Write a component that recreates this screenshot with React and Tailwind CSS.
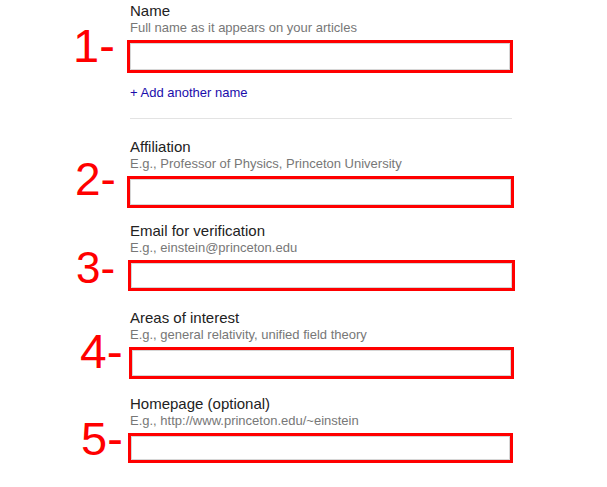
import React from "react";

function Box({ num, numClass, boxClass }) {
  return (
    <div className={`relative border-[3px] border-[#ff0000] ${boxClass}`}>
      <div className="h-full w-full border border-[#d6d6d6]" />
      <span
        className={`absolute leading-none text-[#ff0000] whitespace-nowrap ${numClass}`}
      >
        {num}-
      </span>
    </div>
  );
}

function Field({ label, hint, className, children }) {
  return (
    <div className={className}>
      <div className="text-[15px] leading-[18px] text-[#222]">{label}</div>
      <div className="text-[13px] leading-[16px] text-[#777]">{hint}</div>
      {children}
    </div>
  );
}

export default function App() {
  return (
    <div className="w-[607px] h-[487px] bg-white overflow-hidden font-['Liberation_Sans',Arial,sans-serif]">
      <div className="ml-[130px] w-[382px] pt-[2px] flex flex-col">
        <Field label="Name" hint="Full name as it appears on your articles">
          <Box
            num="1"
            boxClass="mt-[4px] ml-[-3px] w-[386px] h-[33px]"
            numClass="text-[47px] left-[-57px] top-[-21px]"
          />
        </Field>
        <div className="mt-[12px] text-[13px] leading-[16px] text-[#1a0dab]">
          + Add another name
        </div>
        <div className="mt-[17px] h-px bg-[#e3e3e3]" />

        <Field
          className="mt-[19px]"
          label="Affiliation"
          hint="E.g., Professor of Physics, Princeton University"
        >
          <Box
            num="2"
            boxClass="mt-[4px] ml-[-3px] w-[387px] h-[32px]"
            numClass="text-[46px] left-[-55px] top-[-23px]"
          />
        </Field>

        <Field
          className="mt-[14px]"
          label="Email for verification"
          hint="E.g., einstein@princeton.edu"
        >
          <Box
            num="3"
            boxClass="mt-[4px] ml-[-2px] w-[387px] h-[31px]"
            numClass="text-[44px] left-[-55px] top-[-17px]"
          />
        </Field>

        <Field
          className="mt-[18px]"
          label="Areas of interest"
          hint="E.g., general relativity, unified field theory"
        >
          <Box
            num="4"
            boxClass="mt-[4px] ml-[-1px] w-[385px] h-[32px]"
            numClass="text-[48px] left-[-52px] top-[-22px]"
          />
        </Field>

        <Field
          className="mt-[16px]"
          label="Homepage (optional)"
          hint="E.g., http://www.princeton.edu/~einstein"
        >
          <Box
            num="5"
            boxClass="mt-[4px] ml-[-2px] w-[385px] h-[30px]"
            numClass="text-[47px] left-[-50px] top-[-21px]"
          />
        </Field>
      </div>
    </div>
  );
}
